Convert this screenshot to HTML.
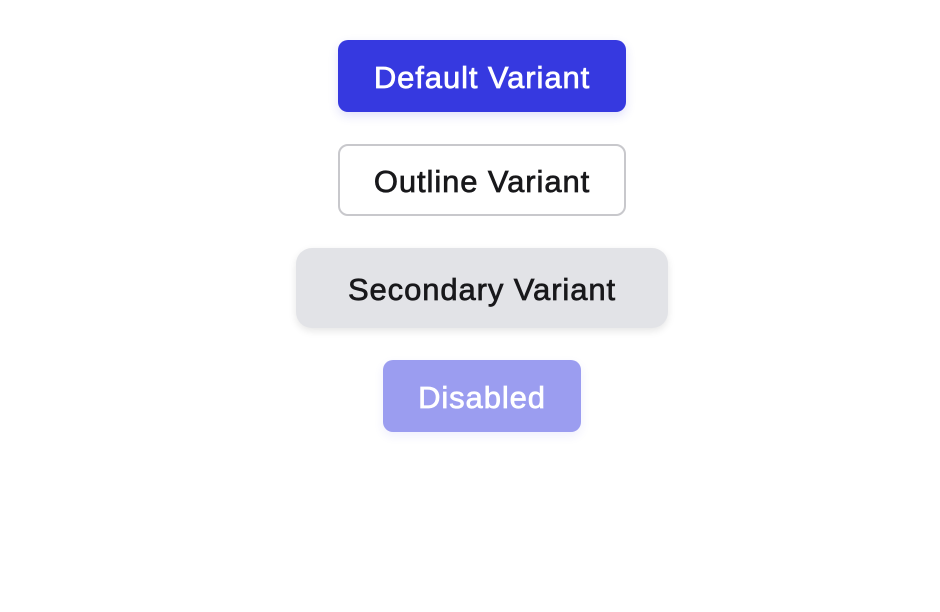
<!DOCTYPE html>
<html><head><style>
html,body{margin:0;padding:0;background:#fff;width:940px;height:612px;overflow:hidden}
.b{position:absolute;display:flex;align-items:center;justify-content:center;box-sizing:border-box;padding-top:3px;font-family:"Liberation Sans",sans-serif;font-size:31px;letter-spacing:0.9px;-webkit-text-stroke:0.7px currentColor}
</style></head><body>
<div class="b" style="left:338px;top:40px;width:288px;height:72px;background:#3639e0;color:#fff;border-radius:10px;box-shadow:0 4px 10px rgba(54,57,224,0.15)">Default Variant</div>
<div class="b" style="left:338px;top:144px;width:288px;height:72px;background:#fff;color:#18181b;border:2px solid #c8c8cc;border-radius:10px">Outline Variant</div>
<div class="b" style="left:296px;top:248px;width:372px;height:80px;background:#e2e3e7;color:#18181b;border-radius:16px;box-shadow:0 3px 8px rgba(0,0,0,0.1)">Secondary Variant</div>
<div class="b" style="left:383px;top:360px;width:198px;height:72px;background:#9b9df0;color:#fff;border-radius:10px;box-shadow:0 4px 10px rgba(54,57,224,0.08)">Disabled</div>
</body></html>
